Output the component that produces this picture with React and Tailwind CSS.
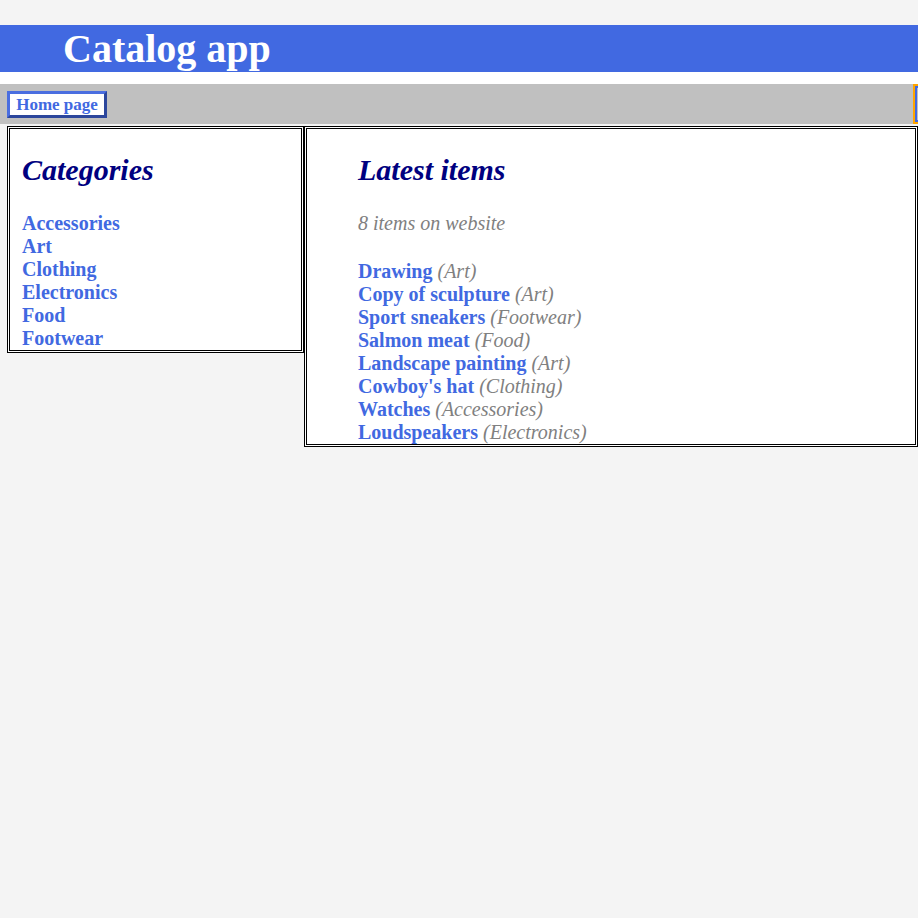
export default function App() {
  const categories = ["Accessories", "Art", "Clothing", "Electronics", "Food", "Footwear"];
  const items = [
    ["Drawing", "Art"],
    ["Copy of sculpture", "Art"],
    ["Sport sneakers", "Footwear"],
    ["Salmon meat", "Food"],
    ["Landscape painting", "Art"],
    ["Cowboy's hat", "Clothing"],
    ["Watches", "Accessories"],
    ["Loudspeakers", "Electronics"],
  ];
  return (
    <div
      className="min-h-screen bg-[#f4f4f4] overflow-hidden"
      style={{ fontFamily: '"Liberation Serif", "Times New Roman", serif' }}
    >
      <div className="pt-[25px]">
        <h1 className="bg-[#4169e1] text-white font-bold text-[40px] leading-[47px] h-[47px] pl-[63px]">
          Catalog app
        </h1>
        <div className="h-[12px] bg-white"></div>
      </div>
      <nav className="flex h-[40px] bg-[#c0c0c0] overflow-hidden">
        <a
          href="#"
          className="mt-[7px] ml-[7px] w-[100px] h-[27px] shrink-0 flex items-center justify-center bg-white text-[#4169e1] font-bold text-[17px] leading-[19px] border-[3px] border-t-[#4a6ee0] border-l-[#4a6ee0] border-b-[#2c469c] border-r-[#2c469c]"
        >
          Home page
        </a>
        <div className="ml-[806px] w-[100px] shrink-0 h-[40px] border-2 border-[#ffa500]">
          <div className="h-full border-2 border-[#4169e1]"></div>
        </div>
      </nav>
      <div className="flex items-start mt-[2px] pl-[7px]">
        <div className="w-[297px] shrink-0 bg-white border-[3px] border-double border-black pl-[12px] pt-[24px]">
          <h2 className="text-[30px] leading-[34px] font-bold italic text-[#000080]">Categories</h2>
          <ul className="mt-[25px]">
            {categories.map((c) => (
              <li key={c} className="text-[20px] leading-[23px]">
                <a href="#" className="font-bold text-[#4169e1]">{c}</a>
              </li>
            ))}
          </ul>
        </div>
        <div className="w-[614px] shrink-0 bg-white border-[3px] border-double border-black pl-[51px] pt-[24px]">
          <h2 className="text-[30px] leading-[34px] font-bold italic text-[#000080]">Latest items</h2>
          <p className="mt-[25px] text-[20px] leading-[23px] italic text-[#808080]">8 items on website</p>
          <ul className="mt-[25px]">
            {items.map(([name, cat]) => (
              <li key={name} className="text-[20px] leading-[23px]">
                <a href="#" className="font-bold text-[#4169e1]">{name}</a>{" "}
                <span className="italic text-[#808080]">({cat})</span>
              </li>
            ))}
          </ul>
        </div>
      </div>
    </div>
  );
}
